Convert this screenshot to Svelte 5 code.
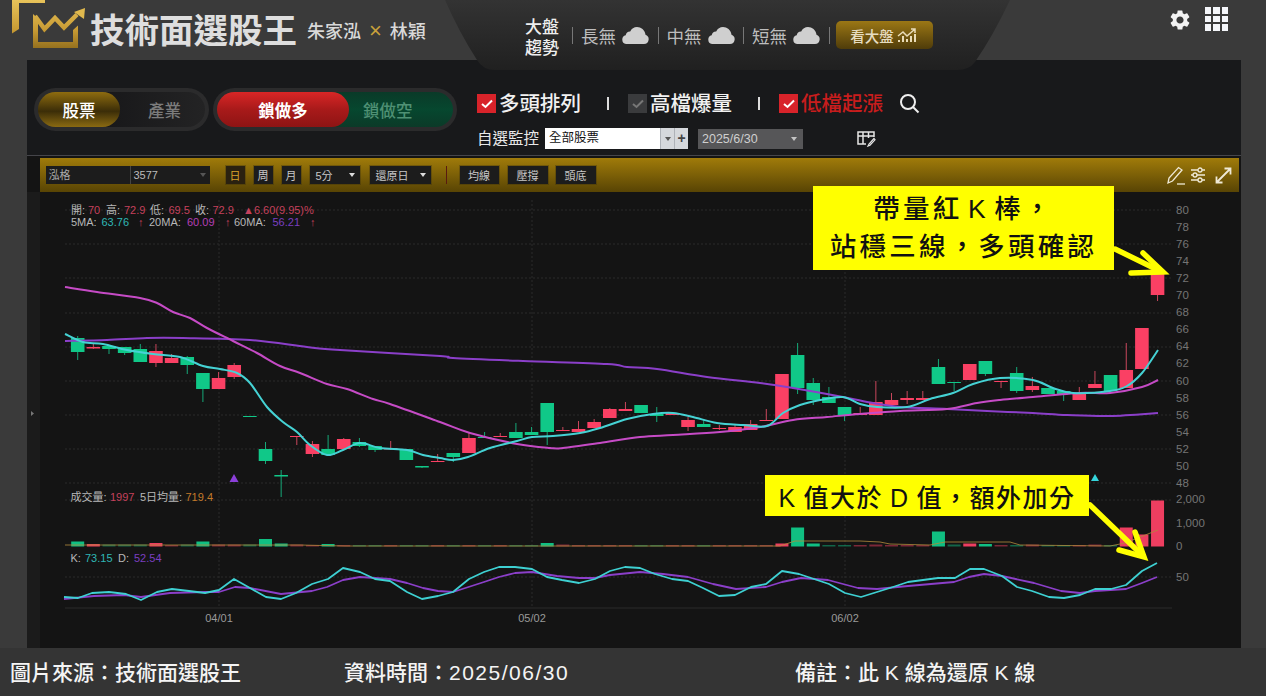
<script lang="ts">
  // Stock screener page: header, filter toolbar and a k-line chart with volume and KD panels.
  // Chart data is stored in page pixels, the svg viewBox below keeps those coordinates.

  type Candle = [string, number, number, number, number];

  const candles: Candle[] = [
    ['g', 338, 352, 336, 360], ['r', 347, 348.5, 343, 349], ['g', 346, 349, 346, 354], ['g', 347, 353, 347, 355],
    ['g', 349, 362, 344, 362], ['r', 351, 363, 344, 367], ['r', 358, 363, 354, 363], ['g', 357, 365, 356, 374],
    ['g', 373, 389, 373, 402], ['r', 378, 389, 372, 389], ['r', 365, 377, 363, 379], ['g', 416, 417, 416, 417],
    ['g', 449, 461, 442, 464], ['g', 475, 476.5, 470, 497], ['r', 436, 437, 436, 445], ['r', 444, 454, 441, 457],
    ['g', 449, 455, 435, 455], ['r', 439, 449, 438, 449], ['g', 442, 446, 438, 447], ['g', 446, 450, 446, 452],
    ['r', 448, 449.5, 441, 450], ['g', 449, 460, 449, 460], ['g', 466, 467.5, 466, 468], ['r', 461, 462, 454, 462],
    ['g', 453, 457, 453, 462], ['r', 438, 453, 433, 453], ['g', 437, 438, 432, 438], ['r', 436, 437, 433, 437],
    ['g', 432, 438, 423, 438], ['g', 432, 435, 427, 435], ['g', 403, 432, 403, 445], ['r', 430, 431, 427, 431],
    ['r', 429, 432, 421, 432], ['r', 422, 428, 419, 428], ['r', 409, 418, 408, 418], ['r', 409, 411, 402, 411],
    ['g', 405, 413, 405, 413], ['g', 414, 416, 407, 422], ['r', 413, 415, 412, 415], ['r', 420, 427, 417, 431],
    ['g', 424, 427, 420, 427], ['r', 428, 429, 425, 430], ['r', 427, 432, 425, 432], ['r', 424, 430, 420, 430],
    ['r', 420, 421, 409, 421], ['r', 374, 419, 374, 419], ['g', 355, 388, 343, 394], ['g', 383, 400, 378, 405],
    ['g', 397, 403, 387, 403], ['g', 407, 415, 407, 421], ['r', 413, 415, 407, 415], ['r', 402, 415, 381, 415],
    ['r', 400, 405, 393, 405], ['r', 398, 400, 391, 404], ['r', 398, 400, 391, 400], ['g', 367, 384, 359, 384],
    ['g', 382, 383, 382, 391], ['r', 364, 380, 364, 380], ['g', 361, 374, 361, 376], ['r', 381, 382, 381, 388],
    ['g', 373, 391, 367, 393], ['r', 386, 390, 377, 392], ['g', 388, 394, 388, 394], ['g', 391, 394, 391, 401],
    ['r', 393, 400, 387, 400], ['r', 384, 388, 371, 388], ['g', 375, 391, 375, 391], ['r', 370, 388, 343, 388],
    ['r', 328, 369, 328, 369], ['r', 271, 295, 271, 301]
  ];

  const SLOT = 15.65;
  const slotX = (i: number) => 77.7 + i * SLOT;

  // height above the volume baseline, anything missing gets the faint default stub
  const volumes: Record<number, number> = {
    0: 5, 1: 2.5, 2: 2, 3: 2, 4: 2, 5: 3.5, 7: 2, 8: 5, 9: 2, 10: 2, 11: 2, 12: 7.5, 13: 3, 14: 2, 16: 2.5,
    30: 3.5, 31: 2, 45: 3, 46: 19, 47: 3, 51: 2, 55: 15, 56: 2, 57: 3, 58: 2.5, 61: 2, 65: 2, 67: 19, 68: 12, 69: 46
  };

  const ma5 = '65,334 83,342 103,344 127,350 153,354 180,357 203,366 220,369 237,373 250,383 267,407 283,422 297,432 310,445 327,455 343,450 360,443 380,448 407,450 423,455 440,458 453,460 468,457 490,448 517,441 532,437 553,436 580,433 600,428 627,419 653,414 673,413 693,417 717,423 743,425 767,426 783,413 800,405 820,400 843,397 860,404 877,407 907,407 930,399 953,393 973,384 1000,378 1033,380 1053,388 1073,393 1110,391 1127,386 1142,373 1158,350';
  const ma20 = '65,287 97,292 140,298 157,303 173,312 190,318 207,328 233,341 257,353 280,366 300,373 327,384 347,389 373,399 390,404 440,422 470,433 517,444 550,448 563,448 600,443 640,437 673,435 720,432 760,427 793,420 827,417 860,414 900,411 947,409 977,403 1000,400 1033,397 1080,393 1110,393 1142,387 1158,380';
  const ma60 = '65,341 107,340 147,338 183,338 250,340 307,347 340,350 440,356 453,358 523,361 607,364 627,367 657,369 707,377 760,383 793,388 843,397 873,403 900,407 947,409 987,411 1033,413 1067,415 1110,416 1158,413';
  const volMa = '65,545 300,545 345,546 780,546 795,541 860,541 880,542 890,544 930,545 945,542 1010,542 1020,545 1110,546 1125,543 1158,530';
  const kLine = '64,597 78,598 92,593 109,592 126,594 141,600 157,592 172,589 189,591 205,593 219,590 234,579 250,588 266,597 281,599 296,593 312,584 328,579 343,568 360,572 375,579 390,581 407,592 422,599 438,596 453,592 469,579 484,572 499,567 515,567 532,569 547,577 562,580 579,583 595,579 610,571 625,567 640,568 655,574 672,579 688,581 703,588 719,596 735,595 751,587 766,584 782,571 799,574 814,579 829,584 845,593 861,597 877,592 893,587 908,582 923,580 938,578 955,578 970,569 984,569 1002,576 1017,587 1032,591 1049,597 1064,598 1080,595 1095,589 1111,589 1126,585 1142,571 1157,563';
  const dLine = '64,599 94,596 124,595 141,597 170,593 205,592 219,592 235,587 250,588 281,594 312,591 327,587 343,580 360,577 390,579 407,583 423,588 438,591 453,592 484,582 499,577 515,573 532,572 557,576 579,578 595,578 610,575 640,572 663,574 688,577 713,584 736,589 766,587 782,582 801,578 828,580 858,588 877,589 908,586 954,582 969,577 984,574 1002,576 1034,583 1061,591 1080,593 1095,591 1126,589 1142,583 1157,577';

  // Catmull-Rom through the points, the moving averages are drawn as curves
  function smooth(points: string): string {
    const p = points.split(' ').map((s) => s.split(',').map(Number));
    let d = `M${p[0][0]} ${p[0][1]}`;
    for (let i = 0; i < p.length - 1; i++) {
      const a = p[i - 1] ?? p[i];
      const b = p[i];
      const c = p[i + 1];
      const e = p[i + 2] ?? c;
      const c1 = [b[0] + (c[0] - a[0]) / 6, b[1] + (c[1] - a[1]) / 6];
      const c2 = [c[0] - (e[0] - b[0]) / 6, c[1] - (e[1] - b[1]) / 6];
      d += `C${c1[0]} ${c1[1]} ${c2[0]} ${c2[1]} ${c[0]} ${c[1]}`;
    }
    return d;
  }

  const gridRows = [210, 244, 278, 313, 347, 381, 415, 449, 483, 500, 577];
  const gridCols = [219, 532, 845];
  const prices = [80, 78, 76, 74, 72, 70, 68, 66, 64, 62, 60, 58, 56, 54, 52, 50, 48];
  const sideLabels = [['2,000', 499], ['1,000', 523], ['0', 546], ['50', 577]];
  const dates = [['04/01', 219], ['05/02', 532], ['06/02', 845]];

  const LABEL = '#b8b8b8';
  const RED = '#c5415c';
  const legend: [string, number, number, string][] = [
    ['開:', 71, 210, LABEL], ['70', 88, 210, RED], ['高:', 106, 210, LABEL], ['72.9', 124, 210, RED],
    ['低:', 150, 210, LABEL], ['69.5', 168.5, 210, RED], ['收:', 195, 210, LABEL], ['72.9', 212.5, 210, RED],
    ['▲6.60(9.95)%', 243, 210, RED],
    ['5MA:', 71, 222, LABEL], ['63.76', 101.5, 222, '#2fb7b4'], ['↑', 138, 222, RED],
    ['20MA:', 149, 222, LABEL], ['60.09', 187, 222, '#b43fb4'], ['↑', 225, 222, RED],
    ['60MA:', 234, 222, LABEL], ['56.21', 272.5, 222, '#7b3fc0'], ['↑', 310, 222, RED],
    ['成交量:', 70.5, 497, LABEL], ['1997', 110, 497, RED], ['5日均量:', 140, 497, LABEL], ['719.4', 185.5, 497, '#c47a2a'],
    ['K:', 70.5, 558, LABEL], ['73.15', 85, 558, '#2fb7b4'], ['D:', 118, 558, LABEL], ['52.54', 134, 558, '#7b3fc0']
  ];

  const clouds = ['長無', '中無', '短無'];
  const filters = [
    { label: '多頭排列', state: 'on' },
    { label: '高檔爆量', state: 'off' },
    { label: '低檔起漲', state: 'hot' }
  ];
</script>

<div class="page" lang="zh-Hant">
  <header class="header">
    <svg class="logo" width="74" height="50" viewBox="12 0 74 50" aria-hidden="true">
      <defs>
        <linearGradient id="gold" x1="0" y1="0" x2="0" y2="50" gradientUnits="userSpaceOnUse">
          <stop offset="0" stop-color="#e8c35a" />
          <stop offset="0.6" stop-color="#c89b34" />
          <stop offset="1" stop-color="#8f6c1c" />
        </linearGradient>
      </defs>
      <path d="M12 0h33v3H19v26l-7 4.500z" fill="url(#gold)" />
      <path d="M33 14l5 4.500V42H73V30l5-4.500V48H33z" fill="url(#gold)" />
      <path d="M35 16l9.500 13 10.500-11 9 9.500 13-13" fill="none" stroke="url(#gold)" stroke-width="4.500" />
      <path d="M74 12l11-4-1 11z" fill="#e0b94e" />
    </svg>
    <h1 class="title">技術面選股王</h1>
    <div class="authors">朱家泓<span class="times">×</span>林穎</div>

    <div class="market">
      <svg class="market-bg" width="565" height="70" viewBox="0 0 565 70" aria-hidden="true">
        <defs>
          <linearGradient id="marketFill" x1="0" y1="0" x2="0" y2="1">
            <stop offset="0" stop-color="#333333" />
            <stop offset="1" stop-color="#202020" />
          </linearGradient>
        </defs>
        <path d="M0 0H565Q548 36 530 62Q524 70 512 70H50Q38 70 32 60Q14 32 0 0z" fill="url(#marketFill)" />
      </svg>
      <div class="market-name">大盤<br />趨勢</div>
      {#each clouds as cloud}
        <span class="sep"></span>
        <span class="trend">{cloud}</span>
        <svg class="cloud" width="29" height="19" viewBox="0 0 29 19" aria-hidden="true">
          <path d="M6 18h18a4.800 4.800 0 0 0 1.500-9.300C25 4 21 1 17 1c-3 0-5.500 1.700-6.800 4.500C8 5.300 6 7 5.700 9.200A4.500 4.500 0 0 0 6 18z" fill="#cfcfcf" />
        </svg>
      {/each}
      <span class="sep"></span>
      <button type="button" class="market-btn">
        看大盤
        <svg width="21" height="15" viewBox="0 0 21 15" fill="none" stroke="#e9dcb8" stroke-width="1.500" aria-hidden="true">
          <path d="M1 8l5-4 4 4 8-7M14 1h4v4" />
          <path d="M2 14v-2M6 14V8M10 14v-3M14 14V8M18 14V6" stroke-width="2" />
        </svg>
      </button>
    </div>

    <div class="header-icons">
      <svg width="24" height="24" viewBox="0 0 24 24" fill="#f3f3f3" aria-hidden="true">
        <path d="M19.140 12.940c.040-.300.060-.610.060-.940 0-.320-.020-.640-.070-.940l2.030-1.580a.490.490 0 0 0 .120-.610l-1.920-3.320a.488.488 0 0 0-.590-.220l-2.390.960c-.500-.380-1.030-.700-1.620-.940l-.360-2.540a.484.484 0 0 0-.480-.410h-3.840c-.240 0-.430.170-.470.410l-.360 2.540c-.590.240-1.130.570-1.620.940l-2.390-.960c-.220-.080-.470 0-.590.220L2.740 8.870c-.120.210-.080.470.120.610l2.030 1.580c-.050.300-.090.630-.090.940s.020.640.070.940l-2.030 1.580a.490.490 0 0 0-.120.610l1.920 3.320c.120.220.370.290.590.220l2.390-.960c.500.380 1.030.700 1.620.940l.360 2.540c.050.240.240.410.480.410h3.840c.240 0 .440-.170.470-.410l.360-2.540c.590-.240 1.130-.560 1.620-.940l2.390.960c.220.080.470 0 .590-.220l1.920-3.320c.120-.220.070-.470-.120-.610l-2.010-1.580zM12 15.600c-1.980 0-3.600-1.620-3.600-3.600s1.620-3.600 3.600-3.600 3.600 1.620 3.600 3.600-1.620 3.600-3.600 3.600z" />
      </svg>
      <div class="apps">
        {#each Array(9) as _}
          <span></span>
        {/each}
      </div>
    </div>
  </header>

  <main class="main">
    <section class="toolbar">
      <div class="switch kind">
        <span class="opt active-gold">股票</span>
        <span class="opt muted">產業</span>
      </div>
      <div class="switch lock">
        <span class="opt active-red">鎖做多</span>
        <span class="opt muted-green">鎖做空</span>
      </div>

      <div class="filters">
        <div class="filter-row">
          {#each filters as f, i}
            {#if i > 0}<span class="filter-sep"></span>{/if}
            <span class="check {f.state}">
              <svg width="12" height="10" viewBox="0 0 12 10" fill="none" stroke="currentColor" stroke-width="2" aria-hidden="true">
                <polyline points="1,5 4.500,8 11,1.500"></polyline>
              </svg>
            </span>
            <span class="filter-label {f.state}">{f.label}</span>
          {/each}
          <svg class="search" width="21" height="21" viewBox="0 0 21 21" fill="none" stroke="#efefef" stroke-width="2" aria-hidden="true">
            <circle cx="9" cy="9" r="7"></circle>
            <path d="M14 14l5.500 5.500" />
          </svg>
        </div>
        <div class="watch-row">
          <span class="watch-label">自選監控</span>
          <div class="watch-select">
            <span class="watch-value">全部股票</span>
            <span class="watch-arrow"><i class="caret"></i></span>
            <span class="watch-plus">+</span>
          </div>
          <div class="date-select">2025/6/30<i class="caret light"></i></div>
          <svg class="table-icon" width="20" height="17" viewBox="0 0 20 17" fill="none" stroke="#e6e6e6" stroke-width="1.500" aria-hidden="true">
            <path d="M10 14H2V2h16v5M2 6h16M7 2v12M12.500 2v6" />
            <path d="M18 8.500l-5 5.500-1 2 2-.8 5-5.400z" stroke-width="1.200" />
          </svg>
        </div>
      </div>
    </section>

    <section class="frame">
      <div class="bar">
        <div class="combo">
          <span class="combo-name">泓格</span>
          <span class="combo-code">3577<i class="caret dim"></i></span>
        </div>
        <span class="tool period active">日</span>
        <span class="tool period">周</span>
        <span class="tool period">月</span>
        <span class="tool pick w50">5分<i class="caret"></i></span>
        <span class="tool pick w60">還原日<i class="caret"></i></span>
        <span class="bar-sep"></span>
        <span class="tool study w39">均線</span>
        <span class="tool study">壓撐</span>
        <span class="tool study">頭底</span>
        <div class="bar-icons">
          <svg width="20" height="19" viewBox="0 0 20 19" fill="none" stroke="#efe9d6" stroke-width="1.300" aria-hidden="true">
            <path d="M2 17l1-5L12.500 1.500 16 4 6.500 15z" />
            <path d="M11 18h8" />
          </svg>
          <svg class="sliders" width="16" height="16" viewBox="0 0 16 16" fill="none" stroke="#efe9d6" stroke-width="1.300" aria-hidden="true">
            <path d="M1 3h14M1 8h14M1 13h14" />
            <circle cx="10" cy="3" r="2" fill="#7a5e0a"></circle>
            <circle cx="5" cy="8" r="2" fill="#7a5e0a"></circle>
            <circle cx="10" cy="13" r="2" fill="#7a5e0a"></circle>
          </svg>
          <svg width="17" height="17" viewBox="0 0 17 17" fill="none" stroke="#efe9d6" stroke-width="1.800" aria-hidden="true">
            <path d="M2 15L15 2M9.500 1.500H15.500V7.500M1.500 9.500V15.500H7.500" />
          </svg>
        </div>
      </div>

      <div class="chart-body">
        <svg class="chart" width="1214" height="456" viewBox="27 192 1214 456" aria-label="K 線圖">
          <rect x="27" y="192" width="13" height="456" fill="#1b1b1b" />
          <path d="M31 411l3 2.500-3 2.500z" fill="#777" />

          {#each gridRows as y}
            <line x1="65" x2="1172" y1={y} y2={y} class="grid" />
          {/each}
          <line x1="65" x2="1172" y1="608" y2="608" class="grid solid" />
          {#each gridCols as x}
            <line x1={x} x2={x} y1="200" y2="608" class="grid" />
          {/each}

          {#each prices as price, i}
            <text x="1176" y={214 + i * 17.05} class="axis">{price}</text>
          {/each}
          {#each sideLabels as [text, y]}
            <text x="1176" y={Number(y) + 4} class="axis">{text}</text>
          {/each}
          {#each dates as [text, x]}
            <text x={x} y="622" class="date">{text}</text>
          {/each}

          {#each legend as [text, x, y, color]}
            <text x={x} y={y + 3.500} fill={color} class="legend">{text}</text>
          {/each}

          {#each candles as [c, top, bottom, wickTop, wickBottom], i}
            <line x1={slotX(i)} x2={slotX(i)} y1={wickTop} y2={wickBottom} class={c === 'r' ? 'wick-r' : 'wick-g'} />
            <rect x={slotX(i) - 6.800} y={top} width="13.600" height={Math.max(bottom - top, 1)} class={c === 'r' ? 'up' : 'down'} />
          {/each}

          {#each candles as [c], i}
            {@const h = volumes[i] ?? 1.500}
            <rect x={slotX(i) - 6.500} y={546.500 - h} width="13" height={h} class={c === 'r' ? 'up' : 'down'} opacity={h > 2 ? 0.95 : 0.45} />
          {/each}

          <polyline points={volMa} class="line vol-ma" />
          <path d={smooth(ma60)} class="line" stroke="#8b3fc9" />
          <path d={smooth(ma20)} class="line" stroke="#c64bc6" />
          <path d={smooth(ma5)} class="line" stroke="#45d2d4" />
          <polyline points={dLine} class="line thin" stroke="#8b3fc9" />
          <polyline points={kLine} class="line thin" stroke="#3ed0d2" />

          <path d="M234 474l4.500 8h-9z" fill="#8b3fd9" />
          <path d="M1095 474l4 7h-8z" fill="#35d5dc" />

          <g class="arrow">
            <path d="M1115 249L1160 271" />
            <path d="M1131 273L1163 272 1143 253" />
            <path d="M1090 505L1141 554" stroke-width="6.500" />
            <path d="M1119 550L1144 557 1135 532" stroke-width="6.500" />
          </g>
        </svg>

        <div class="callout top">帶量紅 K 棒，<br />站穩三線，多頭確認</div>
        <div class="callout low">K 值大於 D 值，額外加分</div>
      </div>
    </section>
  </main>

  <footer class="footer">
    <span class="src">圖片來源：技術面選股王</span>
    <span class="time">資料時間：<span class="digits">2025/06/30</span></span>
    <span>備註：此 K 線為還原 K 線</span>
  </footer>
</div>

<style>
  :global(body) {
    margin: 0;
    background: #383838;
  }

  .page {
    width: 1266px;
    height: 696px;
    overflow: hidden;
    display: flex;
    flex-direction: column;
    background: #3a3a3a;
    color: #fff;
    font-family: "Liberation Sans", "Noto Sans CJK TC", sans-serif;
  }

  .header {
    position: relative;
    z-index: 2;
    height: 60px;
    flex: none;
    display: flex;
    align-items: flex-start;
    padding-left: 12px;
    box-sizing: border-box;
  }

  .logo {
    flex: none;
  }

  .title {
    margin: 10px 0 0 4px;
    font-size: 34.500px;
    line-height: 42px;
    font-weight: 700;
    color: #dedede;
    white-space: nowrap;
  }

  .authors {
    margin: 18px 0 0 10px;
    font-size: 18px;
    line-height: 26px;
    font-weight: 500;
    color: #d8d8d8;
    white-space: nowrap;
  }

  .times {
    margin: 0 8px;
    color: #c9a13b;
    font-size: 22px;
  }

  .market {
    position: absolute;
    left: 445px;
    top: 0;
    width: 565px;
    height: 70px;
    box-sizing: border-box;
    padding-left: 80px;
    display: flex;
    align-items: center;
  }

  .market-bg {
    position: absolute;
    left: 0;
    top: 0;
  }

  .market-name {
    position: relative;
    margin-top: 5px;
    font-size: 17px;
    line-height: 21px;
    font-weight: 500;
    color: #eee;
  }

  .sep {
    position: relative;
    width: 1px;
    height: 17px;
    margin: 0 8px 0 13px;
    background: #777;
  }

  .trend {
    position: relative;
    font-size: 17.500px;
    color: #bdbdbd;
    margin-right: 4px;
  }

  .cloud {
    position: relative;
    margin-right: -4.500px;
  }

  .market-btn {
    position: relative;
    width: 97px;
    height: 28px;
    padding: 0;
    margin-left: -2px;
    border: 0;
    border-radius: 5px;
    display: flex;
    align-items: center;
    justify-content: center;
    gap: 3px;
    background: linear-gradient(#9b7715, #4f3c0a);
    color: #e6dcc0;
    font: 500 14.500px "Liberation Sans", "Noto Sans CJK TC", sans-serif;
  }

  .header-icons {
    margin: 8px 38px 0 auto;
    display: flex;
    align-items: flex-start;
    gap: 13px;
  }

  .apps {
    display: grid;
    grid-template-columns: repeat(3, 6.500px);
    gap: 2px;
    margin-top: -1px;
  }

  .apps span {
    height: 6.500px;
    background: #f4f6fa;
  }

  .main {
    width: 1214px;
    height: 588px;
    margin-left: 27px;
    flex: none;
    display: flex;
    flex-direction: column;
    background: #18191b;
  }

  .toolbar {
    height: 95px;
    flex: none;
    display: flex;
    align-items: flex-start;
    box-sizing: border-box;
    padding: 28px 0 0 7px;
    gap: 4px;
  }

  .switch {
    height: 43px;
    box-sizing: border-box;
    padding: 4px;
    display: flex;
    border-radius: 22px;
    background: #2b2b2c;
  }

  .kind {
    width: 175px;
  }

  .lock {
    width: 244px;
  }

  .opt {
    height: 35px;
    display: flex;
    align-items: center;
    justify-content: center;
    font-size: 16.500px;
    font-weight: 500;
  }

  .active-gold {
    width: 82px;
    border-radius: 18px;
    background: linear-gradient(#8e6c0f, #3b2d08 55%, #8a6a12);
    z-index: 1;
  }

  .muted {
    flex: 1;
    margin-left: -14px;
    padding-left: 18px;
    color: #7c7c7c;
    border-radius: 0 18px 18px 0;
    background: linear-gradient(90deg, #18181a, #232324);
  }

  .active-red {
    width: 132px;
    border-radius: 18px;
    background: linear-gradient(#d92626, #a81a1a 50%, #8e1414);
    font-weight: 700;
    z-index: 1;
  }

  .muted-green {
    flex: 1;
    margin-left: -16px;
    padding-left: 30px;
    justify-content: flex-start;
    border-radius: 0 18px 18px 0;
    background: linear-gradient(#0a3a28, #06472f 50%, #0b3a28);
    color: #4f9074;
  }

  .filters {
    margin: 6px 0 0 16px;
    display: flex;
    flex-direction: column;
  }

  .filter-row {
    height: 19px;
    display: flex;
    align-items: center;
  }

  .check {
    width: 19px;
    height: 19px;
    display: flex;
    align-items: center;
    justify-content: center;
    background: #d8232a;
    color: #fff;
  }

  .check.off {
    background: #3a3b3d;
    color: #777;
  }

  .filter-label {
    margin-left: 3px;
    font-size: 20.500px;
    line-height: 20px;
    font-weight: 500;
    color: #f1f1f1;
    white-space: nowrap;
  }

  .filter-label.hot {
    color: #c81d1d;
  }

  .filter-sep {
    width: 2px;
    height: 13px;
    margin: 0 19px 0 26px;
    background: #ddd;
  }

  .search {
    margin-left: 16px;
  }

  .watch-row {
    margin-top: 15px;
    height: 21px;
    display: flex;
    align-items: center;
  }

  .watch-label {
    width: 68px;
    margin-top: -3px;
    font-size: 15.500px;
    color: #e8e8e8;
    white-space: nowrap;
  }

  .watch-select {
    width: 143px;
    height: 21px;
    display: flex;
    background: #fff;
    color: #111;
    font-size: 12.500px;
    line-height: 21px;
  }

  .watch-value {
    flex: 1;
    padding-left: 4px;
  }

  .watch-arrow,
  .watch-plus {
    width: 13px;
    display: flex;
    align-items: center;
    justify-content: center;
    background: #d5d8dc;
    border-left: 1px solid #aeb2b8;
    color: #444;
    font-size: 14px;
    font-weight: 700;
  }

  .date-select {
    position: relative;
    width: 105px;
    height: 20px;
    margin-left: 10px;
    box-sizing: border-box;
    padding-left: 4px;
    background: #565658;
    color: #cfcfcf;
    font-size: 12.500px;
    line-height: 20px;
  }

  .date-select .caret {
    position: absolute;
    right: 6px;
    top: 8px;
  }

  .table-icon {
    margin-left: 53px;
  }

  .caret {
    display: inline-block;
    width: 0;
    height: 0;
    border: 3px solid transparent;
    border-top: 4px solid #555;
    border-bottom: 0;
  }

  .caret.light {
    border-top-color: #c4c4c4;
  }

  .caret.dim {
    border-top-color: #555;
  }

  .frame {
    flex: 1;
    min-height: 0;
    display: flex;
    flex-direction: column;
    border-top: 1px solid #45454a;
    box-sizing: border-box;
    background: #141414;
    padding-top: 2px;
  }

  .bar {
    height: 34px;
    flex: none;
    margin: 0 2px 0 13px;
    padding-left: 5.500px;
    display: flex;
    align-items: center;
    background: linear-gradient(#a07b0a, #584404);
    box-sizing: border-box;
    font-size: 11px;
    color: #bbb;
  }

  .combo {
    width: 164px;
    height: 18px;
    display: flex;
    background: #1c1c1c;
    line-height: 18px;
    margin-right: 16px;
  }

  .combo-name {
    width: 85px;
    padding-left: 3px;
    box-sizing: border-box;
    border-right: 1px solid #444;
    color: #aaa;
  }

  .combo-code {
    flex: 1;
    display: flex;
    align-items: center;
    justify-content: space-between;
    padding: 0 4px 0 3px;
  }

  .tool {
    height: 18px;
    display: flex;
    align-items: center;
    justify-content: center;
    background: #1c1c1c;
    color: #c8c8c8;
    box-shadow: 0 0 0 1px #33291055;
  }

  .period {
    width: 19px;
    margin-right: 9px;
  }

  .period.active {
    color: #d8a32c;
    background: #2a2110;
  }

  .pick {
    justify-content: space-between;
    box-sizing: border-box;
    padding: 0 5px 0 6px;
  }

  .pick .caret {
    border-top-color: #ddd;
  }

  .w50 {
    width: 50px;
    margin-right: 10px;
  }

  .w60 {
    width: 61px;
  }

  .bar-sep {
    width: 1px;
    height: 18px;
    margin: 0 13px 0 15px;
    background: #5a1a10;
  }

  .study {
    width: 40px;
    margin-right: 8px;
  }

  .w39 {
    width: 39px;
    margin-right: 9px;
  }

  .bar-icons {
    margin: 0 7px 0 auto;
    display: flex;
    align-items: center;
    gap: 4px;
  }

  .sliders {
    margin-right: 5px;
  }

  .chart-body {
    position: relative;
    flex: 1;
    min-height: 0;
  }

  .chart {
    display: block;
  }

  .grid {
    stroke: #2b2b2b;
    stroke-width: 1;
    stroke-dasharray: 2 2;
  }

  .grid.solid {
    stroke-dasharray: none;
  }

  .axis {
    fill: #747474;
    font-size: 11.500px;
    font-family: "Liberation Sans", sans-serif;
  }

  .date {
    fill: #9a9a9a;
    font-size: 11px;
    text-anchor: middle;
  }

  .legend {
    font-size: 11px;
  }

  .up {
    fill: #fa4064;
  }

  .down {
    fill: #10c888;
  }

  .wick-r {
    stroke: #c8475c;
  }

  .wick-g {
    stroke: #16a878;
  }

  .line {
    fill: none;
    stroke-width: 2;
    stroke-linejoin: round;
  }

  .line.thin {
    stroke-width: 1.800;
  }

  .line.vol-ma {
    stroke: #b08a3c;
    stroke-width: 1;
    opacity: 0.8;
  }

  .arrow path {
    fill: none;
    stroke: #ffff00;
    stroke-width: 5.500;
    stroke-linejoin: miter;
    stroke-linecap: round;
  }

  .callout {
    position: absolute;
    box-sizing: border-box;
    display: flex;
    align-items: center;
    justify-content: center;
    text-align: center;
    background: #ffff00;
    color: #111;
    font-weight: 500;
    white-space: nowrap;
  }

  .top {
    left: 786px;
    top: -6px;
    width: 301px;
    height: 84px;
    font-size: 26.500px;
    line-height: 38px;
    letter-spacing: 3.200px;
    word-spacing: -5px;
  }

  .low {
    left: 738px;
    top: 283px;
    width: 324px;
    height: 41px;
    font-size: 25px;
    letter-spacing: 1.500px;
    word-spacing: -1.500px;
  }

  .footer {
    flex: 1;
    display: flex;
    align-items: center;
    padding: 0 0 3px 10px;
    font-size: 21px;
    font-weight: 500;
    color: #f4f4f4;
    background: #343434;
    white-space: nowrap;
  }

  .src {
    width: 334px;
  }

  .time {
    width: 451px;
  }

  .digits {
    letter-spacing: 1.500px;
  }
</style>
